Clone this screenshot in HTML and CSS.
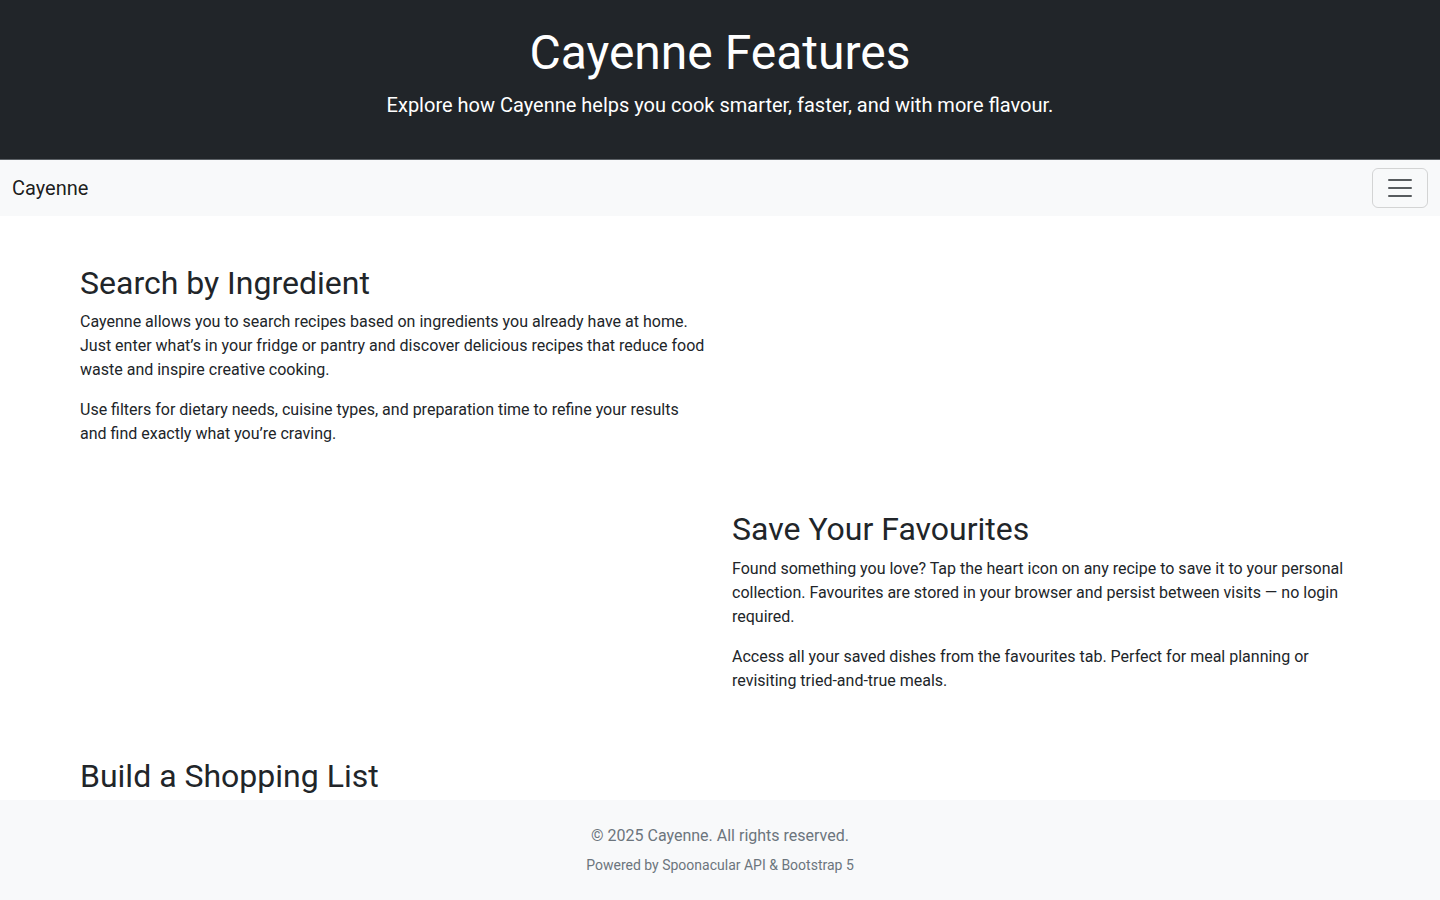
FILE: index.html
```html
<!DOCTYPE html>
<html lang="en">
<head>
<meta charset="utf-8">
<title>Cayenne Features</title>
<link rel="stylesheet" href="styles.css">
</head>
<body>
<header class="hero">
  <h1 class="hero-title">Cayenne Features</h1>
  <p class="hero-lead">Explore how Cayenne helps you cook smarter, faster, and with more flavour.</p>
</header>
<nav class="navbar">
  <a class="brand" href="#">Cayenne</a>
  <button class="toggler" type="button" aria-label="Toggle navigation">
    <svg class="toggler-icon" viewBox="0 0 30 30" width="30" height="30" aria-hidden="true">
      <path d="M4 7h22M4 15h22M4 23h22" stroke="rgba(33,37,41,0.75)" stroke-width="2" stroke-linecap="round" stroke-miterlimit="10"/>
    </svg>
  </button>
</nav>
<main class="features">
  <section class="feature">
    <div class="feature-text feature-left">
      <h2>Search by Ingredient</h2>
      <p>Cayenne allows you to search recipes based on ingredients you already have at home. Just enter what’s in your fridge or pantry and discover delicious recipes that reduce food waste and inspire creative cooking.</p>
      <p>Use filters for dietary needs, cuisine types, and preparation time to refine your results and find exactly what you’re craving.</p>
    </div>
    <div class="feature-media"></div>
  </section>
  <section class="feature">
    <div class="feature-media"></div>
    <div class="feature-text feature-right">
      <h2>Save Your Favourites</h2>
      <p>Found something you love? Tap the heart icon on any recipe to save it to your personal collection. Favourites are stored in your browser and persist between visits — no login required.</p>
      <p>Access all your saved dishes from the favourites tab. Perfect for meal planning or revisiting tried-and-true meals.</p>
    </div>
  </section>
  <section class="feature">
    <div class="feature-text feature-left">
      <h2>Build a Shopping List</h2>
    </div>
    <div class="feature-media"></div>
  </section>
</main>
<footer class="footer">
  <p class="footer-copy">© 2025 Cayenne. All rights reserved.</p>
  <p class="footer-small">Powered by Spoonacular API &amp; Bootstrap 5</p>
</footer>
</body>
</html>
```

FILE: styles.css
```css
* { box-sizing: border-box; }

html, body {
  margin: 0;
  padding: 0;
}

body {
  font-family: Roboto, "Liberation Sans", Arial, sans-serif;
  font-size: 16px;
  line-height: 1.5;
  color: #212529;
  background: #ffffff;
  padding-bottom: 100px;
}

.hero {
  background: #212529;
  color: #ffffff;
  text-align: center;
  padding: 24px 12px 24px;
  border-bottom: 1px solid #5c6166;
  height: 160px;
}

.hero-title {
  margin: 0 0 8px;
  font-size: 48px;
  font-weight: 400;
  line-height: 1.2;
}

.hero-lead {
  margin: 0;
  font-size: 20px;
  font-weight: 400;
  line-height: 1.5;
}

.navbar {
  background: #f8f9fa;
  height: 56px;
  padding: 8px 12px;
  display: flex;
  align-items: center;
  justify-content: space-between;
}

.brand {
  font-size: 20px;
  line-height: 30px;
  color: rgba(0, 0, 0, 0.9);
  text-decoration: none;
  padding: 5px 0;
}

.toggler {
  width: 56px;
  height: 40px;
  padding: 4px 12px;
  background: transparent;
  border: 1px solid rgba(0, 0, 0, 0.15);
  border-radius: 6px;
  display: flex;
  align-items: center;
  justify-content: center;
  cursor: pointer;
}

.toggler-icon {
  display: block;
}

.features {
  max-width: 1320px;
  margin: 0 auto;
  padding: 48px 12px;
}

.feature {
  display: grid;
  grid-template-columns: 1fr 1fr;
  margin: 0 -12px 48px;
}

.feature-text {
  padding: 0 12px;
}

.feature-left {
  padding-left: 20px;
}

.feature h2 {
  margin: 0 0 8px;
  font-size: 32px;
  font-weight: 400;
  line-height: 1.2;
}

.feature p {
  margin: 0 0 16px;
}

.footer {
  position: fixed;
  left: 0;
  right: 0;
  bottom: 0;
  height: 100px;
  background: #f8f9fa;
  text-align: center;
  color: #6c757d;
  padding: 24px 12px 0;
}

.footer-copy {
  margin: 0 0 7px;
  font-size: 16px;
  line-height: 24px;
}

.footer-small {
  margin: 0;
  font-size: 14px;
  line-height: 21px;
}
```
